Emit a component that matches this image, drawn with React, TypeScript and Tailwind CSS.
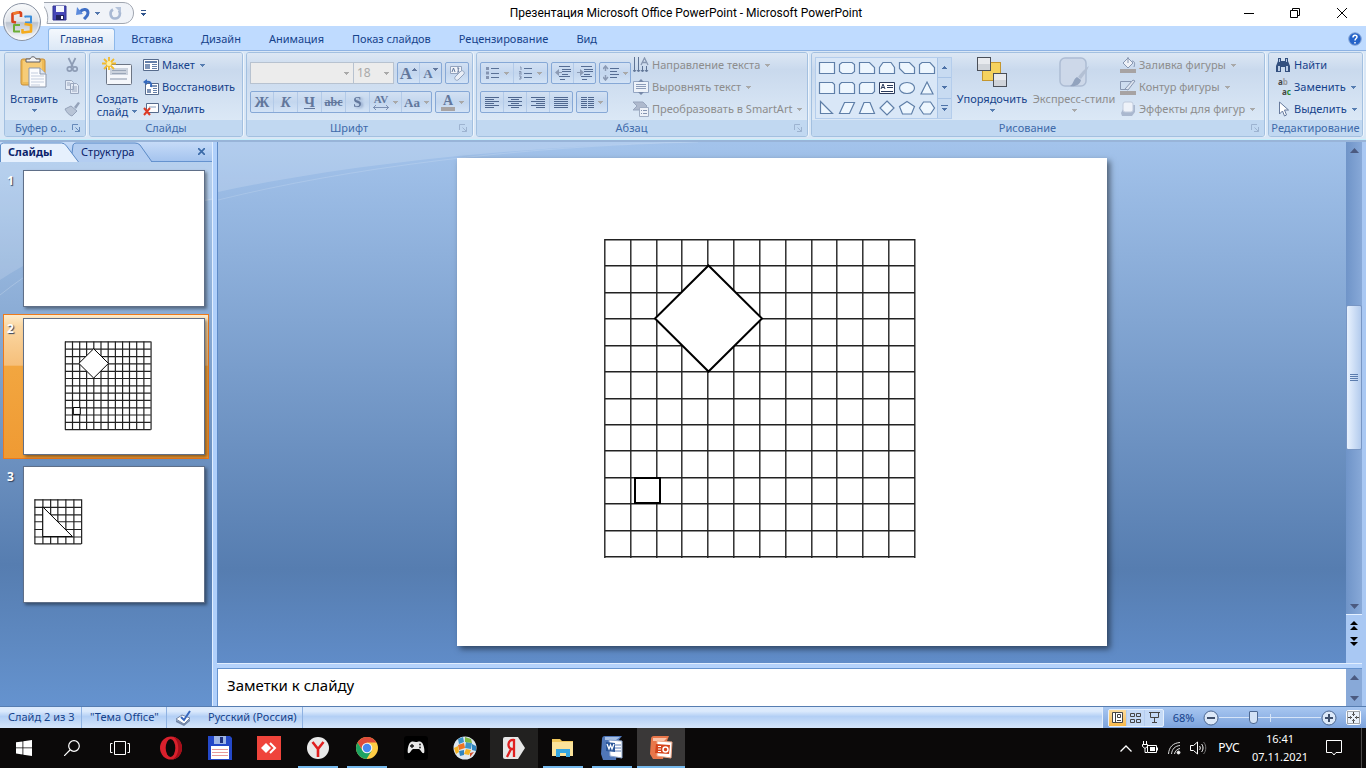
import React from "react";
import clsx from "clsx";

const COLS = [148, 174, 200, 225, 251, 277, 303, 329, 355, 380, 406, 432, 458];
const ROWS = [81, 107, 134, 160, 187, 213, 240, 266, 292, 319, 345, 372, 398];
const SMALL_COLS = [38, 67, 95, 121, 150, 179, 207];
const SMALL_ROWS = [117, 144, 171, 196, 224, 251, 276];

type DrawingProps = { thumb?: boolean };

function Grid({ cols, rows, thumb }: { cols: number[]; rows: number[]; thumb?: boolean }) {
  const dx = thumb ? 1 : -0.2;
  const dy = thumb ? 2 : 0.7;
  return (
    <g stroke="#222" strokeWidth={thumb ? 1.2 : 1.4}>
      {cols.map((x) => (
        <line key={"c" + x} x1={x + dx} x2={x + dx} y1={rows[0]} y2={rows[rows.length - 1] + 2} vectorEffect="non-scaling-stroke" />
      ))}
      {rows.map((y) => (
        <line key={"r" + y} x1={cols[0]} x2={cols[cols.length - 1]} y1={y + dy} y2={y + dy} vectorEffect="non-scaling-stroke" />
      ))}
    </g>
  );
}

function RhombusDrawing({ thumb }: DrawingProps) {
  return (
    <svg viewBox="0 0 650 488" className="block h-full w-full">
      <Grid cols={COLS} rows={ROWS} thumb={thumb} />
      <path d="M251.500 107.500L305 160.500L251.500 213.500L198 160.500Z" fill="#fff" stroke="#000" strokeWidth={thumb ? 1 : 2} vectorEffect="non-scaling-stroke" />
      <rect x="178" y="320" width="25" height="25" fill="#fff" stroke="#000" strokeWidth={thumb ? 1 : 2} vectorEffect="non-scaling-stroke" />
    </svg>
  );
}

function TriangleDrawing() {
  return (
    <svg viewBox="0 0 650 488" className="block h-full w-full">
      <Grid cols={SMALL_COLS} rows={SMALL_ROWS} thumb />
      <path d="M67.500 144V251.500H175Z" fill="#fff" stroke="#000" vectorEffect="non-scaling-stroke" />
    </svg>
  );
}

/* ---------- icons ---------- */

function Arrow({ className }: { className?: string }) {
  return (
    <svg width="5" height="3" viewBox="0 0 5 3" className={clsx("shrink-0", className)} fill="currentColor" shapeRendering="crispEdges">
      <path d="M0 0h5v1H0zM1 1h3v1H1zM2 2h1v1H2z" />
    </svg>
  );
}

function OfficeLogo() {
  return (
    <svg width="40" height="40" viewBox="0 0 40 40">
      <defs>
        <linearGradient id="orb" x1="0" y1="0" x2="0" y2="1">
          <stop offset="0" stopColor="#fafbfc" />
          <stop offset=".48" stopColor="#dfe3e9" />
          <stop offset=".52" stopColor="#bcc4d0" />
          <stop offset="1" stopColor="#fdfdfe" />
        </linearGradient>
      </defs>
      <circle cx="20" cy="20" r="18.500" fill="url(#orb)" stroke="#8a93a3" />
      <circle cx="20" cy="20" r="17" fill="none" stroke="#f4f6fa" strokeOpacity=".8" />
      <g fill="none" strokeWidth="2.600" strokeLinejoin="round">
        <path d="M14 20.500l-3.500-.7v-8l7.500-1.600 1 .8v4" stroke="#d8431c" />
        <path d="M11 11.500l6-1.300" stroke="#f17a2c" />
        <path d="M22.500 15l1-.5h5.500v6h-6" stroke="#3d8fdb" strokeWidth="2" />
        <path d="M18 23h-6v6.500h6" stroke="#6cae35" strokeWidth="2" />
        <path d="M20.500 27v3.500l8.500-1v-6.500l-6.500-1" stroke="#f5ab1c" />
      </g>
    </svg>
  );
}

function SaveIcon() {
  return (
    <svg width="16" height="16" viewBox="0 0 16 16">
      <path d="M1 1h13v14H1z" fill="#4546b8" stroke="#33348f" />
      <path d="M4 1h8v6H4z" fill="#f4f6fd" />
      <path d="M4 10h8v5H4z" fill="#22245f" />
      <path d="M9 11h2v3H9z" fill="#fff" />
    </svg>
  );
}

function UndoIcon() {
  return (
    <svg width="15" height="15" viewBox="0 0 15 15">
      <path d="M4 6c3-4 8-3 8 1 0 3-2 4-4 6" fill="none" stroke="#3f6fc6" strokeWidth="3" />
      <path d="M0 9l1-8 6 7z" fill="#5c8bdc" />
    </svg>
  );
}

function RedoIcon() {
  return (
    <svg width="15" height="15" viewBox="0 0 15 15">
      <path d="M5 3.500c-4 2-3 9 2 9s6-5 4-8" fill="none" stroke="#a9b9d3" strokeWidth="2.600" />
      <path d="M7 1h6v6z" fill="#b5c3da" />
    </svg>
  );
}

function PasteIcon() {
  return (
    <svg width="32" height="32" viewBox="0 0 32 32">
      <rect x="3" y="3" width="24" height="26" rx="2" fill="#eebb58" stroke="#c98f37" />
      <rect x="5" y="5" width="19" height="21" fill="#f6cc78" />
      <path d="M8 6V3h4c1-3 5-3 6 0h4v3z" fill="#f4f4f4" stroke="#5c5c64" />
      <path d="M11 12h11l6 6v13H11z" fill="#fbfcfe" stroke="#8b97ab" />
      <path d="M22 12v6h6" fill="#dde5f1" stroke="#8b97ab" />
      <path d="M13 17h7M13 20h13M13 23h13M13 26h13M13 29h9" stroke="#c3cdde" />
    </svg>
  );
}

function CutIcon() {
  return (
    <svg width="16" height="16" viewBox="0 0 16 16" fill="none" stroke="#8d9cb5" strokeWidth="1.700">
      <path d="M4.500 1l4.500 9M11.500 1L7 10" />
      <circle cx="5.500" cy="12" r="2.200" />
      <circle cx="11" cy="12" r="2.200" />
    </svg>
  );
}

function CopyIcon() {
  return (
    <svg width="16" height="16" viewBox="0 0 16 16" fill="#e4ebf6" stroke="#9ba8bf">
      <path d="M1.500 1.500h6l2 2v7h-8zM6.500 4.500h6l2 2v8h-8z" />
      <path d="M8 8h5M8 10h5M8 12h5M3 4h3M3 6h3" />
    </svg>
  );
}

function BrushIcon() {
  return (
    <svg width="16" height="16" viewBox="0 0 16 16">
      <path d="M10 6l4-5 2 1-4 6z" fill="#94a2b9" />
      <path d="M1 8l6-3 6 5-5 5c-3-1-5-3-7-7z" fill="#b8c4d6" stroke="#94a2b9" />
    </svg>
  );
}

function NewSlideIcon() {
  return (
    <svg width="32" height="32" viewBox="0 0 32 32">
      <rect x="5.500" y="8.500" width="25" height="20" rx="1" fill="#f5f7fb" stroke="#6c7584" />
      <path d="M9 12h18v7H9z" fill="#cbd2dd" />
      <path d="M11 14h14v1H11zM11 17h14v1H11z" fill="#9aa6b8" />
      <path d="M9 23h17" stroke="#8794a9" />
      <path d="M8 1v13M1 7.500h14M3 3l10 10M13 3L3 13" stroke="#f2bb2c" strokeWidth="1.800" />
      <circle cx="8" cy="7.500" r="2.500" fill="#fff0a3" />
    </svg>
  );
}

function LayoutIcon() {
  return (
    <svg width="16" height="16" viewBox="0 0 16 16">
      <path d="M.5 2.500h15v11H.5z" fill="#fff" stroke="#566b8c" />
      <path d="M2 4h12v2H2z" fill="#647fa9" />
      <path d="M2 7h5v5H2z" fill="#7f95b8" />
      <path d="M9 7.500h5M9 9.500h5M9 11.500h5" stroke="#647fa9" />
    </svg>
  );
}

function ResetIcon() {
  return (
    <svg width="16" height="16" viewBox="0 0 16 16">
      <path d="M2.500 4.500h13v11h-13z" fill="#fff" stroke="#566b8c" />
      <path d="M7 6h7v2H7zM4 10h4v4H4z" fill="#7f95b8" />
      <path d="M10 9.500h4M10 11.500h4M10 13.500h4" stroke="#647fa9" />
      <path d="M3 3c4-1 6 1 5 5" fill="none" stroke="#3469bd" strokeWidth="2" />
      <path d="M0 3l4-3v6z" fill="#3469bd" />
    </svg>
  );
}

function DeleteSlideIcon() {
  return (
    <svg width="16" height="16" viewBox="0 0 16 16">
      <path d="M3.500 2.500h12v9h-12z" fill="#fdfdfe" stroke="#566b8c" />
      <path d="M6 5h7v2H6z" fill="#c2cddd" />
      <path d="M1 7l6 7M7 7l-6 7" stroke="#dd3a25" strokeWidth="2" />
    </svg>
  );
}

function DialogIcon({ dim }: { dim?: boolean }) {
  return (
    <svg width="9" height="9" viewBox="0 0 9 9" fill="none" stroke={dim ? "#9db3d0" : "#6589b9"}>
      <path d="M.5 6V.5H6M3.500 3.500l4 4M7.500 3v4.500H3" />
    </svg>
  );
}

function ClearFormatIcon() {
  return (
    <svg width="17" height="16" viewBox="0 0 17 16">
      <path d="M1.500 1.500h11v7h-11z" fill="#f0f3f9" stroke="#93a3bd" />
      <path d="M3 7l1.500-4L6 7M8 3h2l-1 2 1 2H8" fill="none" stroke="#64789b" />
      <path d="M6 12l6-6c2-1 4 1 3 3l-6 6c-2 1-4-1-3-3z" fill="#e9eef7" stroke="#93a3bd" />
    </svg>
  );
}

function BulletsIcon({ numbered }: { numbered?: boolean }) {
  return (
    <svg width="14" height="14" viewBox="0 0 14 14">
      {numbered ? (
        <path d="M1 1h1v3M0 5.500h2v1.500H0v1h3M0 10h2v3H0M1 11.500h1" fill="none" stroke="#8494b1" />
      ) : (
        <path d="M0 1h3v3H0zM0 5.500h3v3H0zM0 10h3v3H0z" fill="#8494b1" />
      )}
      <path d="M5 2.500h8M5 7.500h8M5 11.500h8" stroke="#5a7196" />
    </svg>
  );
}

function IndentIcon({ flip }: { flip?: boolean }) {
  return (
    <svg width="16" height="14" viewBox="0 0 16 14">
      <path d="M4 .5h11M7 3.500h9M7 5.500h9M7 8.500h6M4 10.500h11M5 13.500h5" stroke="#566d93" />
      <path d={flip ? "M0 6h3V3l4 3.500L3 10V7H0z" : "M7 6H4V3L0 6.500 4 10V7h3z"} fill="#8b9ab4" />
    </svg>
  );
}

function LineSpacingIcon() {
  return (
    <svg width="16" height="16" viewBox="0 0 16 16">
      <path d="M2.500 1v5M2.500 10v5M0 4l2.500-3L5 4M0 12l2.500 3L5 12" fill="none" stroke="#8b9ab4" strokeWidth="1.500" />
      <path d="M7 3.500h9M7 6.500h7M7 9.500h9M7 12.500h7" stroke="#566d93" />
    </svg>
  );
}

type AlignKind = "left" | "center" | "right" | "justify";

function AlignIcon({ kind }: { kind: AlignKind }) {
  const paths = {
    left: "M0 .5h14M0 2.500h9M0 4.500h14M0 6.500h9M0 8.500h14M0 10.500h9",
    center: "M0 .5h14M3 2.500h8M0 4.500h14M3 6.500h8M0 8.500h14M3 10.500h8",
    right: "M0 .5h14M5 2.500h9M0 4.500h14M5 6.500h9M0 8.500h14M5 10.500h9",
    justify: "M0 .5h14M0 2.500h14M0 4.500h14M0 6.500h14M0 8.500h14M0 10.500h14",
  };
  return (
    <svg width="14" height="11" viewBox="0 0 14 11" stroke="#4f678f" shapeRendering="crispEdges">
      <path d={paths[kind]} />
    </svg>
  );
}

function ColumnsIcon() {
  return (
    <svg width="13" height="11" viewBox="0 0 13 11" stroke="#4f678f" shapeRendering="crispEdges">
      <path d="M0 .5h6M0 2.500h6M0 4.500h6M0 6.500h6M0 8.500h6M0 10.500h6M7 .5h6M7 2.500h6M7 4.500h6M7 6.500h6M7 8.500h6M7 10.500h6" />
    </svg>
  );
}

function TextDirectionIcon() {
  return (
    <svg width="16" height="16" viewBox="0 0 16 16">
      <path d="M1.500 0v14M5.500 0v14M9.500 9v5M13.500 9v5" stroke="#5f7495" />
      <path d="M0 13l1.500 2L3 13M4 13l1.500 2L7 13M8 13l1.500 2 1.500-2M12 13l1.500 2 1.500-2" fill="none" stroke="#5f7495" />
      <path d="M8 8l3.500-7L15 8M9.500 5.500h4" fill="none" stroke="#8797b1" strokeWidth="1.300" />
    </svg>
  );
}

function AlignTextIcon() {
  return (
    <svg width="16" height="16" viewBox="0 0 16 16">
      <path d="M.5 2.500h15v11H.5z" fill="#edf2f9" stroke="#93a5c2" />
      <path d="M3 5.500h10M3 7.500h10M3 9.500h10" stroke="#8b9bb8" />
      <path d="M5 3l3-3 3 3zM5 13l3 3 3-3z" fill="#7688a8" />
    </svg>
  );
}

function SmartArtIcon() {
  return (
    <svg width="16" height="16" viewBox="0 0 16 16">
      <path d="M0 1h10l4 4-4 4H0l4-4z" fill="#aeb9cd" stroke="#97a5bd" />
      <path d="M6.500 6.500h9v9h-9z" fill="#edf1f8" stroke="#a0adc3" />
      <path d="M8 9.500h1M10 9.500h4M8 12.500h1M10 12.500h4" stroke="#8494b1" />
    </svg>
  );
}

function ArrangeIcon() {
  return (
    <svg width="32" height="32" viewBox="0 0 32 32">
      <rect x="6.500" y="6.500" width="18" height="18" fill="#f5d25e" stroke="#c4962e" />
      <rect x="1.500" y="1.500" width="13" height="13" fill="#d0d4da" stroke="#4a4f58" />
      <path d="M2 2h12v6H2z" fill="#e8eaee" />
      <rect x="17.500" y="17.500" width="13" height="13" fill="#d0d4da" stroke="#4a4f58" />
      <path d="M18 18h12v6H18z" fill="#e8eaee" />
    </svg>
  );
}

function QuickStylesIcon() {
  return (
    <svg width="32" height="32" viewBox="0 0 32 32">
      <rect x="2" y="2" width="26" height="28" rx="5" fill="#cdd8e9" stroke="#adbcd3" strokeWidth="1.500" />
      <path d="M31 10c-5 3-8 7-11 11l3 2c3-4 6-8 8-13z" fill="#b3c0d4" />
      <path d="M19 21l4 3c-1 5-6 7-11 6 4-2 3-7 7-9z" fill="#92a3be" />
    </svg>
  );
}

function FillIcon() {
  return (
    <svg width="16" height="16" viewBox="0 0 16 16">
      <path d="M8 1l5 5-5 5-5-5z" fill="#eef1f7" stroke="#8897b1" />
      <path d="M8 0v6M12 4c3 0 3 3 2 6" fill="none" stroke="#8897b1" />
      <path d="M0 12h16v4H0z" fill="#a7a3a3" />
    </svg>
  );
}

function OutlineIcon() {
  return (
    <svg width="16" height="16" viewBox="0 0 16 16">
      <path d="M11 2.500H.5v8H8" fill="none" stroke="#8897b1" />
      <path d="M5 10l8-9 2 1-7 9z" fill="#dfe6f1" stroke="#8897b1" />
      <path d="M0 12h16v4H0z" fill="#a7a3a3" />
    </svg>
  );
}

function EffectsIcon() {
  return (
    <svg width="16" height="16" viewBox="0 0 16 16">
      <path d="M5 4h10v7l-3 4H2l-1-3z" fill="#aab8cf" />
      <rect x="3" y="1" width="10" height="10" rx="2" fill="#eef2f9" stroke="#c0cbdd" />
    </svg>
  );
}

function FindIcon() {
  return (
    <svg width="16" height="16" viewBox="0 0 16 16">
      <path d="M3 1h3v3h4V1h3v3l2 5v6h-5v-5H6v5H1V9l2-5z" fill="#33507f" />
      <path d="M3 9h2v5H3zM11 9h2v5h-2zM4 2h1v3H4zM11 2h1v3h-1z" fill="#b9cbe5" />
    </svg>
  );
}

function SelectIcon() {
  return (
    <svg width="16" height="16" viewBox="0 0 16 16">
      <path d="M4.500 1v12l3-3 2 5 2-1-2-5h4z" fill="#fff" stroke="#66799b" />
    </svg>
  );
}

const SHAPES = [
  "M1.500 3.500h15v11h-15z",
  "M4 3.500h10l2.500 2v7l-2.500 2H4l-2.500-2v-7z",
  "M1.500 3.500h10l5 5v6h-15z",
  "M5 3.500h8l3.500 5v6h-15v-6z",
  "M1.500 3.500h10l5 5v6h-10l-5-5z",
  "M4 3.500h8l4.500 5v6h-15v-9z",
  "M1.500 3.500h13l2 2v9h-15z",
  "M3.500 3.500h11l2 2v9h-15v-9z",
  "M3.500 3.500h13v9l-2 2h-13v-9z",
  "",
  "M9 3.500c10 0 10 11 0 11s-10-11 0-11z",
  "M9 3l6 12H3z",
  "M2.500 2.500l12 12h-12z",
  "M6.500 3.500h10l-5 11h-10z",
  "M6 3.500h6l4.500 11h-15z",
  "M9 2l7 7-7 7-7-7z",
  "M9 2.500l7.500 5-3 7.500h-9l-3-7.500z",
  "M5.500 3h7l4 6-4 6h-7l-4-6z",
];

function ShapeIcon({ d }: { d: string }) {
  return (
    <svg width="18" height="18" viewBox="0 0 18 18">
      {d ? (
        <path d={d} fill="#edf6fe" stroke="#5f7fa8" strokeWidth="1.200" />
      ) : (
        <g stroke="#2b3b5c">
          <path d="M1.500 3.500h15v11h-15z" fill="#fff" />
          <path d="M3 10l2-5 2 5M4 8.500h2M9 6.500h6M9 8.500h6M3 12.500h12" fill="none" />
        </g>
      )}
    </svg>
  );
}

/* ---------- ribbon building blocks ---------- */

type GroupProps = {
  title: string;
  className: string;
  launcher?: "on" | "dim";
  children: React.ReactNode;
};

function Group({ title, className, launcher, children }: GroupProps) {
  return (
    <section className={clsx("flex flex-col overflow-hidden rounded-[3px] border border-[#a3c0e0] shadow-[1px_0_0_#eff5fc]", className)}>
      <div className="flex h-[68px] bg-linear-to-b from-[#dce7f4] from-0% via-[#c9d9ed] via-25% to-[#dbe8f6] px-[3px] pt-px">{children}</div>
      <div className={clsx("flex h-4 items-center bg-[#c1d8f1] text-[#3e6aaa]", launcher ? "px-1" : "px-0.5")}>
        <h2 className={clsx("flex-1 truncate text-center", launcher === "dim" && "pr-3")}>{title}</h2>
        {launcher && (
          <button aria-label={title + ": параметры"}>
            <DialogIcon dim={launcher === "dim"} />
          </button>
        )}
      </div>
    </section>
  );
}

type SmallButtonProps = { icon: React.ReactNode; label: string; menu?: boolean; disabled?: boolean };

function SmallButton({ icon, label, menu, disabled }: SmallButtonProps) {
  return (
    <button disabled={disabled} className={clsx("flex h-[22px] items-center gap-[3px] whitespace-nowrap", disabled ? "text-[#8d8d8d]" : "text-[#15428b]")}>
      {icon}
      <span>{label}</span>
      {menu && <Arrow className={clsx("ml-0.5", disabled ? "text-[#a9a9a9]" : "text-[#567db1]")} />}
    </button>
  );
}

function ButtonStrip({ children }: { children: React.ReactNode }) {
  return (
    <div className="flex h-[22px] divide-x divide-[#b3cae8] rounded-[2px] border border-[#86a8d6] bg-linear-to-b from-[#d3e1f3] via-[#c3d6ee] to-[#d3e3f6]">
      {children}
    </div>
  );
}

type StripButtonProps = { label: string; className: string; menu?: boolean; children: React.ReactNode };

function StripButton({ label, className, menu, children }: StripButtonProps) {
  return (
    <button disabled aria-label={label} className={clsx("flex items-center justify-center gap-1 font-['Liberation_Serif',serif] text-[15px] leading-none font-bold text-[#62779c]", className)}>
      {children}
      {menu && <Arrow className="text-[#a9a9a9]" />}
    </button>
  );
}

const TABS = ["Главная", "Вставка", "Дизайн", "Анимация", "Показ слайдов", "Рецензирование", "Вид"];

function TitleBar() {
  return (
    <header className="flex h-[26px] items-center bg-white">
      <div className="relative ml-11 flex h-[22px] w-[90px] items-center">
        <svg className="absolute inset-0" width="90" height="22" viewBox="0 0 90 22">
          <path d="M-4 .5h83c14 0 14 21 0 21H3C5 14 3 6-4 .5z" fill="#f0f3f8" stroke="#a0a6b0" />
        </svg>
        <div className="relative flex items-center pl-2">
          <button aria-label="Сохранить"><SaveIcon /></button>
          <button aria-label="Отменить" className="ml-2"><UndoIcon /></button>
          <button aria-label="Список отмены" className="ml-1 text-[#5377ad]"><Arrow /></button>
          <button aria-label="Вернуть" className="ml-2"><RedoIcon /></button>
        </div>
      </div>
      <button aria-label="Настройка панели быстрого доступа" className="ml-[7px]">
        <svg width="5" height="6" viewBox="0 0 5 6" fill="#31548c" shapeRendering="crispEdges"><path d="M0 0h5v1H0zM0 3h5v1H0zM1 4h3v1H1zM2 5h1v1H2z" /></svg>
      </button>
      <h1 className="flex-1 text-center font-[Roboto,sans-serif] text-[12px] text-black">Презентация Microsoft Office PowerPoint - Microsoft PowerPoint</h1>
      <div className="flex">
        <button aria-label="Свернуть" className="flex w-[46px] justify-center">
          <svg width="10" height="10" viewBox="0 0 10 10" stroke="#000"><path d="M0 5.500h10" /></svg>
        </button>
        <button aria-label="Восстановить окно" className="flex w-[46px] justify-center">
          <svg width="10" height="10" viewBox="0 0 10 10" fill="none" stroke="#000"><path d="M.5 2.500h7v7h-7zM2.500 2.500v-2h7v7h-2" /></svg>
        </button>
        <button aria-label="Закрыть" className="flex w-12 justify-center">
          <svg width="10" height="10" viewBox="0 0 10 10" stroke="#000"><path d="M0 0l10 10M10 0L0 10" /></svg>
        </button>
      </div>
    </header>
  );
}

function TabBar() {
  return (
    <nav className="flex h-6 items-end bg-[#bfdbff] pr-1 pl-12">
      {TABS.map((tab, i) => (
        <button
          key={tab}
          className={clsx(
            "h-[22px] text-[11px] text-[#15428b]",
            i === 0 ? "mr-0.5 rounded-t-[3px] border border-b-0 border-[#8db8ea] bg-linear-to-b from-[#f4f8fd] to-[#dce8f6] px-[11px]" : "px-[14px]"
          )}
        >
          {tab}
        </button>
      ))}
      <button aria-label="Справка" className="mb-1 ml-auto">
        <svg width="14" height="14" viewBox="0 0 14 14">
          <circle cx="7" cy="7" r="6.300" fill="#2563c9" stroke="#8aa9d8" />
          <path d="M5 5.500c0-3 4-3 4-.5C9 6.500 7 6.500 7 8.500M7 10v1.500" fill="none" stroke="#fff" strokeWidth="1.500" />
        </svg>
      </button>
    </nav>
  );
}

function Ribbon() {
  return (
    <div className="flex h-[90px] shrink-0 gap-[3px] border-t border-b border-t-[#8db2e3] border-b-[#c3eefb] bg-[#d9e7f6] pt-px pr-[3px] pb-0.5 pl-1 text-[11px] leading-4">
      <Group title="Буфер о..." className="w-[82px]" launcher="on">
        <button className="flex w-[52px] flex-col items-center pt-0.5 text-[#15428b]">
          <PasteIcon />
          <span className="mt-[3px]">Вставить</span>
          <Arrow className="mt-0.5 text-[#567db1]" />
        </button>
        <div className="ml-1 flex flex-col">
          <button disabled aria-label="Вырезать" className="flex h-[22px] items-center"><CutIcon /></button>
          <button disabled aria-label="Копировать" className="flex h-[22px] items-center"><CopyIcon /></button>
          <button disabled aria-label="Формат по образцу" className="flex h-[22px] items-center"><BrushIcon /></button>
        </div>
      </Group>

      <Group title="Слайды" className="w-[154px]">
        <button className="flex w-12 flex-col items-center pt-0.5 leading-[13px] text-[#15428b]">
          <NewSlideIcon />
          <span className="mt-1">Создать</span>
          <span className="flex items-center gap-1">слайд <Arrow className="text-[#567db1]" /></span>
        </button>
        <div className="ml-0.5 flex flex-col">
          <SmallButton icon={<LayoutIcon />} label="Макет" menu />
          <SmallButton icon={<ResetIcon />} label="Восстановить" />
          <SmallButton icon={<DeleteSlideIcon />} label="Удалить" />
        </div>
      </Group>

      <Group title="Шрифт" className="w-[227px]" launcher="dim">
        <div className="flex flex-col gap-[7px] pt-2">
          <div className="flex gap-[3px]">
            <div className="flex">
              <div className="flex h-[22px] items-center border border-[#b7c2d0] bg-[#ececec] pr-1 text-[#a9a9a9]">
                <select disabled aria-label="Шрифт" className="w-[93px] appearance-none bg-transparent">
                  <option></option>
                </select>
                <Arrow />
              </div>
              <div className="flex h-[22px] items-center border border-l-0 border-[#b7c2d0] bg-[#ececec] pr-1 pl-[3px] text-[#a9a9a9]">
                <select disabled aria-label="Размер шрифта" className="w-[27px] appearance-none bg-transparent text-[12px] opacity-100">
                  <option>18</option>
                </select>
                <Arrow />
              </div>
            </div>
            <ButtonStrip>
              <StripButton label="Увеличить размер" className="w-[22px]"><span className="text-[17px]">A</span><Arrow className="-mt-2 -ml-1 rotate-180" /></StripButton>
              <StripButton label="Уменьшить размер" className="w-[21px]"><span className="text-[13px]">A</span><Arrow className="-mt-2 -ml-1" /></StripButton>
            </ButtonStrip>
            <ButtonStrip>
              <StripButton label="Очистить формат" className="w-[22px]"><ClearFormatIcon /></StripButton>
            </ButtonStrip>
          </div>
          <div className="flex gap-[3px]">
            <ButtonStrip>
              <StripButton label="Полужирный" className="w-[23px]">Ж</StripButton>
              <StripButton label="Курсив" className="w-6"><i>К</i></StripButton>
              <StripButton label="Подчеркнутый" className="w-6"><u>Ч</u></StripButton>
              <StripButton label="Зачеркнутый" className="w-6"><s className="text-[12px]">abc</s></StripButton>
              <StripButton label="Тень" className="w-6"><span className="drop-shadow-[2px_1px_1px_#8ea4c7]">S</span></StripButton>
              <StripButton label="Интервал" className="w-8" menu>
                <span className="flex flex-col items-center text-[11px]">
                  AV
                  <svg width="16" height="5" viewBox="0 0 16 5" fill="none" stroke="#7c90b3"><path d="M0 2.500h16M3 0L.5 2.500 3 5M13 0l2.500 2.500L13 5" /></svg>
                </span>
              </StripButton>
              <StripButton label="Регистр" className="w-[29px]" menu><span className="text-[13px]">Aa</span></StripButton>
            </ButtonStrip>
            <ButtonStrip>
              <StripButton label="Цвет текста" className="w-[33px]" menu>
                <span className="border-b-4 border-[#a7a3a3] px-0.5 text-[14px] leading-[13px]">A</span>
              </StripButton>
            </ButtonStrip>
          </div>
        </div>
      </Group>

      <Group title="Абзац" className="w-[332px]" launcher="dim">
        <div className="flex w-[151px] flex-col gap-[7px] pt-2">
          <div className="flex gap-[3px]">
            <ButtonStrip>
              <StripButton label="Маркеры" className="w-[33px]" menu><BulletsIcon /></StripButton>
              <StripButton label="Нумерация" className="w-[33px]" menu><BulletsIcon numbered /></StripButton>
            </ButtonStrip>
            <ButtonStrip>
              <StripButton label="Уменьшить отступ" className="w-[22px]"><IndentIcon /></StripButton>
              <StripButton label="Увеличить отступ" className="w-[21px]"><IndentIcon flip /></StripButton>
            </ButtonStrip>
            <ButtonStrip>
              <StripButton label="Междустрочный интервал" className="w-[30px]" menu><LineSpacingIcon /></StripButton>
            </ButtonStrip>
          </div>
          <div className="flex gap-[3px]">
            <ButtonStrip>
              <StripButton label="По левому краю" className="w-[23px]"><AlignIcon kind="left" /></StripButton>
              <StripButton label="По центру" className="w-[23px]"><AlignIcon kind="center" /></StripButton>
              <StripButton label="По правому краю" className="w-[23px]"><AlignIcon kind="right" /></StripButton>
              <StripButton label="По ширине" className="w-[22px]"><AlignIcon kind="justify" /></StripButton>
            </ButtonStrip>
            <ButtonStrip>
              <StripButton label="Колонки" className="w-[30px]" menu><ColumnsIcon /></StripButton>
            </ButtonStrip>
          </div>
        </div>
        <div className="ml-0.5 flex flex-col">
          <SmallButton icon={<TextDirectionIcon />} label="Направление текста" menu disabled />
          <SmallButton icon={<AlignTextIcon />} label="Выровнять текст" menu disabled />
          <SmallButton icon={<SmartArtIcon />} label="Преобразовать в SmartArt" menu disabled />
        </div>
      </Group>

      <Group title="Рисование" className="min-w-[450px] flex-1" launcher="dim">
        <div className="mt-[3px] flex h-[62px] border border-[#b4cdec] bg-[#d9e7f7]">
          <div className="grid grid-cols-6 pl-px">
            {SHAPES.map((d, i) => (
              <button key={i} aria-label={"Фигура " + (i + 1)} className="flex h-5 w-5 items-center justify-center">
                <ShapeIcon d={d} />
              </button>
            ))}
          </div>
          <div className="flex w-[14px] flex-col divide-y divide-[#a9c4e6] border-l border-[#a9c4e6] bg-[#c8dbf1] text-[#4d72a8]">
            <button aria-label="Вверх" className="flex flex-1 items-center justify-center"><Arrow className="rotate-180" /></button>
            <button aria-label="Вниз" className="flex flex-1 items-center justify-center"><Arrow /></button>
            <button aria-label="Дополнительно" className="flex flex-1 flex-col items-center justify-center gap-0.5"><span className="h-px w-[7px] bg-[#4d72a8]" /><Arrow /></button>
          </div>
        </div>
        <button className="ml-0.5 flex w-[76px] flex-col items-center pt-0.5 text-[#15428b]">
          <ArrangeIcon />
          <span className="mt-[3px]">Упорядочить</span>
          <Arrow className="mt-0.5 text-[#567db1]" />
        </button>
        <button disabled className="ml-0.5 flex w-[84px] flex-col items-center pt-0.5 text-[#8d8d8d]">
          <QuickStylesIcon />
          <span className="mt-[3px] whitespace-nowrap">Экспресс-стили</span>
          <Arrow className="mt-0.5 text-[#a9a9a9]" />
        </button>
        <div className="ml-1 flex flex-col">
          <SmallButton icon={<FillIcon />} label="Заливка фигуры" menu disabled />
          <SmallButton icon={<OutlineIcon />} label="Контур фигуры" menu disabled />
          <SmallButton icon={<EffectsIcon />} label="Эффекты для фигур" menu disabled />
        </div>
      </Group>

      <Group title="Редактирование" className="w-[95px]">
        <div className="ml-[3px] flex flex-col">
          <SmallButton icon={<FindIcon />} label="Найти" />
          <SmallButton
            icon={
              <span className="flex w-4 flex-col text-[8px] leading-[10px] font-bold text-[#444]" aria-hidden="true">
                <span>a<span className="text-[#999]">b</span></span>
                <span className="self-end">a<span className="text-[#1c8a2c]">c</span></span>
              </span>
            }
            label="Заменить"
            menu
          />
          <SmallButton icon={<SelectIcon />} label="Выделить" menu />
        </div>
      </Group>
    </div>
  );
}

/* ---------- left pane ---------- */

function SlidePanel() {
  const slides = [null, <RhombusDrawing thumb />, <TriangleDrawing />];
  return (
    <aside className="relative flex w-[212px] shrink-0 flex-col bg-linear-to-b from-[#b0cdef] via-[#567db0] via-75% to-[#6593cf]">
      <svg className="absolute inset-x-0 top-5" width="212" height="150" viewBox="0 0 212 150" preserveAspectRatio="none">
        <path d="M0 0h212v38C130 50 50 85 0 118z" fill="#fff" fillOpacity=".14" />
        <path d="M0 133C60 85 140 50 212 37" fill="none" stroke="#fff" strokeOpacity=".2" />
      </svg>
      <div className="relative flex h-5 border-b border-[#6593cf] bg-linear-to-b from-[#c6dbf8] to-[#a5c4ee] text-[11px] leading-5 text-[#0b1f6b]">
        <svg className="absolute inset-0" width="160" height="20" viewBox="0 0 160 20">
          <path d="M71 20l2-17q1-2 3-2h59q3 0 5 2l12 17" fill="#b3cdf1" stroke="#5b8ac6" />
          <path d="M.5 20V3q1-2 3-2h58q3 0 5 3l12 16" fill="#e6f0fd" stroke="#5b8ac6" />
        </svg>
        <button className="relative w-[73px] pl-2 text-left font-bold">Слайды</button>
        <button className="relative pl-2">Структура</button>
        <button aria-label="Закрыть область" className="relative mr-[7px] ml-auto">
          <svg width="7" height="7" viewBox="0 0 7 7" stroke="#3b6aa8" strokeWidth="1.700"><path d="M0 0l7 7M7 0L0 7" /></svg>
        </button>
      </div>
      <ol className="relative flex flex-col gap-[3px] pt-1 pr-[3px] pl-[3px]">
        {slides.map((drawing, i) => (
          <li
            key={i}
            className={clsx(
              "flex h-[145px] items-start border pt-[3px]",
              i === 1 ? "border-[#ee7a1b] bg-[linear-gradient(to_bottom,#fdebcb_0%,#fbd7a2_8%,#f6bf7a_35%,#f2a640_36%,#ef9a33_100%)]" : "border-transparent"
            )}
          >
            <span className="w-[19px] pt-[3px] pl-[3px] text-[12px] leading-4 font-bold text-white [text-shadow:1px_1px_1px_#33445f]">{i + 1}</span>
            <button aria-label={"Слайд " + (i + 1)} className="h-[137px] w-[182px] border border-[#5f6f88] bg-white shadow-[2px_2px_3px_#00000066]">
              {drawing}
            </button>
          </li>
        ))}
      </ol>
    </aside>
  );
}

function ScrollArrow({ label, up }: { label: string; up?: boolean }) {
  return (
    <button aria-label={label} className="flex h-4 w-full items-center justify-center">
      <svg width="9" height="5" viewBox="0 0 9 5" fill="#4b5a80" className={clsx(up && "rotate-180")}><path d="M0 0h9L4.500 5z" /></svg>
    </button>
  );
}

function DoubleArrow({ label, up }: { label: string; up?: boolean }) {
  return (
    <button aria-label={label} className="flex h-4 w-full items-center justify-center">
      <svg width="8" height="9" viewBox="0 0 8 9" className={clsx(up && "rotate-180")}><path d="M0 0h8L4 4zM0 5h8L4 9z" /></svg>
    </button>
  );
}

function Workspace() {
  return (
    <main className="flex min-w-0 flex-1 flex-col bg-[#a9c8f3] pr-1">
      <div className="flex flex-1">
        <div className="relative flex flex-1 items-center justify-center border-l border-[#5f8bc7] bg-linear-to-b from-[#a3c3eb] via-[#567db0] via-82% to-[#608cc8]">
          <svg className="absolute top-0 left-0" width="480" height="60" viewBox="0 0 480 60">
            <path d="M0 0h480C300 4 130 22 0 50z" fill="#fff" fillOpacity=".16" />
            <path d="M0 58C130 26 300 4 480 0" fill="none" stroke="#fff" strokeOpacity=".15" />
          </svg>
          <div className="relative mb-0.5 h-[488px] w-[650px] bg-white shadow-[3px_3px_6px_#00000080]">
            <RhombusDrawing />
          </div>
        </div>
        <div className="flex w-4 flex-col">
          <div className="flex flex-1 flex-col border-b border-[#e4f0ff] bg-linear-to-r from-[#6f94c8] to-[#88a9d8]">
            <ScrollArrow label="Прокрутить вверх" up />
            <div className="min-h-0 flex-[147]" />
            <div className="flex h-[145px] flex-col items-center justify-center gap-px rounded-[2px] border border-[#7896c4] bg-linear-to-r from-[#e9f2fe] to-[#b3cbed]">
              <span className="h-px w-2 bg-[#5b7cae]" />
              <span className="h-px w-2 bg-[#5b7cae]" />
              <span className="h-px w-2 bg-[#5b7cae]" />
              <span className="h-px w-2 bg-[#5b7cae]" />
            </div>
            <div className="min-h-0 flex-[149]" />
            <ScrollArrow label="Прокрутить вниз" />
          </div>
          <div className="h-[48px] pt-0.5">
            <DoubleArrow label="Предыдущий слайд" up />
            <DoubleArrow label="Следующий слайд" />
          </div>
        </div>
      </div>
      <div className="h-[6px] border-t border-b border-t-[#e1eeff] border-b-[#6593cf] bg-[#b4d2fb]" />
      <div className="flex h-[37px]">
        <textarea
          aria-label="Заметки"
          defaultValue="Заметки к слайду"
          className="block h-full flex-1 resize-none overflow-hidden border-l border-[#6593cf] bg-white px-[9px] pt-1 text-[15px] leading-6 text-black outline-none"
        />
        <div className="flex w-4 flex-col justify-between bg-[#88a9d8]">
          <ScrollArrow label="Заметки вверх" up />
          <ScrollArrow label="Заметки вниз" />
        </div>
      </div>
    </main>
  );
}

function StatusBar() {
  return (
    <footer className="flex h-[22px] shrink-0 items-stretch border-t border-[#567db1] bg-linear-to-b from-[#dceafc] from-20% via-[#b3cff5] via-45% to-[#d5e5fa] text-[11px] leading-5 text-[#15428b]">
      <span className="w-[82px] border-r border-[#8fb2e2] pl-2">Слайд 2 из 3</span>
      <span className="w-[85px] border-r border-[#8fb2e2] pl-2">"Тема Office"</span>
      <button aria-label="Проверка правописания" className="flex w-8 items-center justify-center">
        <svg width="17" height="16" viewBox="0 0 17 16">
          <path d="M1 9l6-4 8 3-6 6z" fill="#fff" stroke="#7285a5" />
          <path d="M1 10l8 4 6-5v2l-6 5-8-4z" fill="#7285a5" />
          <path d="M6 7l3 3 6-9" fill="none" stroke="#3767bd" strokeWidth="2" />
        </svg>
      </button>
      <span className="w-[104px] border-r border-[#8fb2e2] pl-[9px]">Русский (Россия)</span>
      <div className="ml-auto flex items-center border-l border-[#e3eefc] bg-linear-to-b from-[#a8c7f1] to-[#7da3dc] px-[5px]">
        <div className="flex h-[18px] divide-x divide-[#b5cdef] rounded-[2px] border border-[#e4effd] bg-[#c5daf6]">
          <button aria-label="Обычный" className="flex w-[18px] items-center justify-center bg-linear-to-b from-[#fbdc9c] to-[#f8b949]">
            <svg width="11" height="11" viewBox="0 0 11 11" fill="#fff" stroke="#444"><path d="M.5.5h10v10H.5zM3.500.5v10M5.500 2.500h3v3h-3zM5 8.500h4" /></svg>
          </button>
          <button aria-label="Сортировщик слайдов" className="flex w-[18px] items-center justify-center">
            <svg width="11" height="10" viewBox="0 0 11 10" fill="none" stroke="#444"><path d="M.5.5h4v3h-4zM6.500.5h4v3h-4zM.5 6.500h4v3h-4zM6.500 6.500h4v3h-4z" /></svg>
          </button>
          <button aria-label="Показ слайдов" className="flex w-[18px] items-center justify-center">
            <svg width="11" height="11" viewBox="0 0 11 11" fill="none" stroke="#444"><path d="M0 .5h11M1.500 1v4.500h8V1M5.500 6v4M3 10.500h5" /></svg>
          </button>
        </div>
        <button className="w-[39px] text-center">68%</button>
        <button aria-label="Уменьшить">
          <svg width="16" height="16" viewBox="0 0 16 16"><circle cx="8" cy="8" r="7" fill="#dce8f8" stroke="#4d6892" /><path d="M4 8h8" stroke="#3f4f6b" strokeWidth="2" /></svg>
        </button>
        <div className="relative flex w-[102px] items-center">
          <span className="absolute left-[51px] h-2 w-px bg-[#d5e4f8]" />
          <input
            type="range"
            aria-label="Масштаб"
            min={0}
            max={100}
            defaultValue={32}
            className="relative h-px w-full appearance-none bg-[#d5e4f8] [&::-webkit-slider-thumb]:h-[13px] [&::-webkit-slider-thumb]:w-[9px] [&::-webkit-slider-thumb]:appearance-none [&::-webkit-slider-thumb]:rounded-t-[1px] [&::-webkit-slider-thumb]:rounded-b-[4px] [&::-webkit-slider-thumb]:border [&::-webkit-slider-thumb]:border-[#4d6892] [&::-webkit-slider-thumb]:bg-[#d3e2f6]"
          />
        </div>
        <button aria-label="Увеличить">
          <svg width="16" height="16" viewBox="0 0 16 16"><circle cx="8" cy="8" r="7" fill="#dce8f8" stroke="#4d6892" /><path d="M4 8h8M8 4v8" stroke="#3f4f6b" strokeWidth="2" /></svg>
        </button>
        <button aria-label="По размеру окна" className="ml-[9px]">
          <svg width="15" height="15" viewBox="0 0 15 15">
            <rect x=".5" y=".5" width="14" height="14" rx="2" fill="#eaf1fb" stroke="#fff" />
            <path d="M1.500 1.500h12v12h-12z" fill="none" stroke="#555" strokeDasharray="1 1" />
            <path d="M7.500 2v4M7.500 9v4M2 7.500h4M9 7.500h4" fill="none" stroke="#444" />
            <path d="M6 4.500h3M6 10.500h3M4.500 6v3M10.500 6v3" fill="none" stroke="#666" />
          </svg>
        </button>
      </div>
    </footer>
  );
}

/* ---------- Windows taskbar ---------- */

const APPS = [
  {
    name: "Opera",
    icon: (
      <svg width="24" height="24" viewBox="0 0 24 24">
        <ellipse cx="12" cy="12" rx="11" ry="11.500" fill="#d9202c" />
        <path d="M14 .8c12 2 12 20.400 0 22.400 7-4 7-18.400 0-22.400z" fill="#a50e19" />
        <ellipse cx="11.500" cy="12" rx="4.800" ry="9" fill="#0b0909" />
      </svg>
    ),
  },
  {
    name: "Диск",
    icon: (
      <svg width="24" height="24" viewBox="0 0 24 24">
        <path d="M0 0h22l2 2v22H0z" fill="#2448c8" />
        <path d="M6 0h12v8H6z" fill="#9fb6e6" />
        <path d="M12 1h3v6h-3z" fill="#1d2f7c" />
        <path d="M3 10h18v13H3z" fill="#fff" />
        <path d="M4 13.500h16M4 16.500h16M4 19.500h16" stroke="#e79b9b" />
      </svg>
    ),
  },
  {
    name: "AnyDesk",
    icon: (
      <svg width="24" height="24" viewBox="0 0 24 24">
        <path d="M0 0h24v24H0z" fill="#ef443b" />
        <path d="M4 12l5-5 5 5-5 5z" fill="#fff" />
        <path d="M13 7l5 5-5 5" fill="none" stroke="#fff" strokeWidth="2" />
      </svg>
    ),
  },
  {
    name: "Яндекс.Браузер",
    open: true,
    icon: (
      <svg width="24" height="24" viewBox="0 0 24 24">
        <circle cx="12" cy="12" r="11" fill="#e9e9e9" />
        <path d="M6.500 6l5.500 7 5.500-7M12 12v9" fill="none" stroke="#e02020" strokeWidth="2.600" />
      </svg>
    ),
  },
  {
    name: "Chrome",
    open: true,
    icon: (
      <svg width="24" height="24" viewBox="0 0 24 24">
        <circle cx="12" cy="12" r="11" fill="#fc4" />
        <path d="M2.500 6.500A11 11 0 0 1 21.500 6.500H12L7.500 14.500z" fill="#de4b3b" />
        <path d="M2.500 6.500A11 11 0 0 0 11.500 23L16.500 15l-9-.5z" fill="#1da362" />
        <circle cx="12" cy="12" r="5.300" fill="#f4f4f4" />
        <circle cx="12" cy="12" r="4.200" fill="#4688f1" />
      </svg>
    ),
  },
  {
    name: "Игры",
    icon: (
      <svg width="24" height="24" viewBox="0 0 24 24">
        <rect width="24" height="24" rx="3" fill="#000" />
        <path d="M7 6c2-1 3 0 5 0s3-1 5 0c3 1 4 10 3 11-2 1-3-3-5-4H9c-2 1-3 5-5 4-1-1 0-10 3-11z" fill="#e8e8e8" />
        <path d="M8 8v4M6 10h4" stroke="#111" strokeWidth="1.300" />
        <circle cx="16" cy="8.500" r="1" fill="#333" />
        <circle cx="16" cy="11.500" r="1" fill="#333" />
      </svg>
    ),
  },
  {
    name: "Сеть",
    icon: (
      <svg width="24" height="24" viewBox="0 0 24 24">
        <circle cx="12" cy="12" r="11.500" fill="#dfe7ee" />
        <path d="M5 3l5-2 1 5-5 2zM13 6l6 1-1 6-6-1z" fill="#3b94c9" />
        <path d="M12 1l6 2 1 4-7-1z" fill="#7fb944" />
        <path d="M5 9l6-2 1 5-6 2z" fill="#ee7423" />
        <path d="M1 12l4-2 1 6-3 2zM13 13l5 1-2 5-5-1z" fill="#f3b325" />
        <path d="M6 15l5-1v5l-4 1zM19 8l4 2v5l-4-1z" fill="#2f84bf" />
        <path d="M17 17l4-1-4 5z" fill="#d44d2d" />
      </svg>
    ),
  },
  {
    name: "Яндекс",
    hot: true,
    icon: (
      <svg width="24" height="24" viewBox="0 0 24 24">
        <path d="M3 1h13l7 11-7 11H3q-2 0-2-2V3q0-2 2-2z" fill="#e7e7e7" />
        <path d="M12 3v18M12 4c-7-1-7 9-2 9h2M9 13l-4 8" fill="none" stroke="#e02020" strokeWidth="2.300" />
      </svg>
    ),
  },
  {
    name: "Проводник",
    open: true,
    icon: (
      <svg width="24" height="24" viewBox="0 0 24 24">
        <path d="M1 3h8l2 2h11v15H1z" fill="#f0c75b" />
        <path d="M1 6h21v14H1z" fill="#fbe39a" />
        <path d="M5 13h14v8h-4v-4H9v4H5z" fill="#36a6e0" />
      </svg>
    ),
  },
  {
    name: "Word",
    open: true,
    icon: (
      <svg width="24" height="24" viewBox="0 0 24 24">
        <path d="M2 3q0-3 3-3h17l-4 5-2 19H3L1 18z" fill="#5077b8" />
        <path d="M5 1h15l-4 3H5z" fill="#a6bfe4" />
        <path d="M9 4l13 1v17l-12-2z" fill="#fff" stroke="#8da6cd" />
        <path d="M15 9h6M15 12h6M15 15h6" stroke="#5d7fb8" />
        <path d="M6 6l9 1v9l-9-1z" fill="#2b579a" />
        <path d="M7 8l2 5 1.500-4 1.500 4 2-5" fill="none" stroke="#fff" strokeWidth="1.300" />
      </svg>
    ),
  },
  {
    name: "PowerPoint",
    active: true,
    icon: (
      <svg width="24" height="24" viewBox="0 0 24 24">
        <path d="M2 3q0-3 3-3h15l-2 5-4 18H4l-3-5z" fill="#e8764a" />
        <path d="M4 2h14l-3 3H4z" fill="#f9c3aa" />
        <path d="M8 5l15 1-1 16-14-2z" fill="#fff" stroke="#eda383" />
        <path d="M7 8l14 1-1 9-14-1z" fill="#d5441c" />
        <path d="M9 10.500h3M9 13h3M9 15.500h3" stroke="#fff" />
        <circle cx="16.500" cy="13.500" r="2.500" fill="none" stroke="#fff" strokeWidth="1.500" />
      </svg>
    ),
  },
];

function Taskbar() {
  return (
    <div className="flex h-10 shrink-0 items-stretch bg-[#0b0909] text-white">
      <button aria-label="Пуск" className="flex w-12 items-center justify-center">
        <svg width="16" height="16" viewBox="0 0 16 16" fill="#fff"><path d="M0 2.300L6.500 1.400V7.500H0zM7.300 1.300L16 0v7.500H7.300zM0 8.300h6.500v6.200L0 13.600zM7.300 8.300H16V16l-8.700-1.300z" /></svg>
      </button>
      <button aria-label="Поиск" className="flex w-12 items-center justify-center">
        <svg width="16" height="16" viewBox="0 0 16 16" fill="none" stroke="#fff" strokeWidth="1.200"><circle cx="10" cy="6" r="5.300" /><path d="M6 10l-6 6" /></svg>
      </button>
      <button aria-label="Представление задач" className="mr-[3px] flex w-12 items-center justify-center">
        <svg width="20" height="16" viewBox="0 0 20 16" fill="none" stroke="#fff"><path d="M4.500 1.500h11v13h-11zM2.500 3.500h-2v9h2M17.500 3.500h2v9h-2" /></svg>
      </button>
      <div className="flex gap-px">
        {APPS.map((app) => (
          <button
            key={app.name}
            aria-label={app.name}
            className={clsx("flex w-12 flex-col items-center justify-between pt-2", app.active && "bg-[#3a3838]", app.hot && "bg-[#222120]")}
          >
            {app.icon}
            <span className={clsx("h-0.5", app.active ? "w-full bg-[#76b9ed]" : "w-10", app.open && "bg-[#76b9ed]")} />
          </button>
        ))}
      </div>
      <div className="ml-auto flex items-center pr-1">
        <button aria-label="Скрытые значки" className="flex w-6 justify-center">
          <svg width="12" height="7" viewBox="0 0 12 7" fill="none" stroke="#fff" strokeWidth="1.300"><path d="M.5 6.500L6 1l5.500 5.500" /></svg>
        </button>
        <button aria-label="Питание" className="flex w-6 justify-center">
          <svg width="16" height="14" viewBox="0 0 16 14" fill="none" stroke="#fff"><path d="M5.500 4.500h9v7h-9zM15.500 6.500v3M1.500 0v3M4.500 0v3M.5 3.500h5v2l-2 1.500h-1l-2-1.500zM3 7v4.500h2" /><path d="M8 6h5v4H8z" fill="#fff" stroke="none" /></svg>
        </button>
        <button aria-label="Сеть Wi-Fi" className="flex w-6 justify-center">
          <svg width="13" height="13" viewBox="0 0 13 13" fill="none" stroke="#ddd"><path d="M.5 12C1 5 5 1 12 .5M3.500 12C4 7 7 4 12 3.500M6.500 12C7 9 9 7 12 6.500" /><circle cx="10.500" cy="10.500" r="1.500" fill="#fff" /></svg>
        </button>
        <button aria-label="Громкость" className="flex w-6 justify-center">
          <svg width="17" height="14" viewBox="0 0 17 14" fill="none" stroke="#fff"><path d="M.5 4.500h3l4-3.500v12l-4-3.500h-3zM9.500 5c1 1 1 3 0 4M11.500 3c2 2 2 6 0 8" /><path d="M13.500 1c3 3 3 9 0 12" stroke="#777" /></svg>
        </button>
        <button className="w-[38px] text-center text-[12px]">РУС</button>
        <time dateTime="2021-11-07T16:41" className="w-16 text-center text-[11px] leading-[18px]">16:41<br />07.11.2021</time>
        <button aria-label="Центр уведомлений" className="flex w-11 justify-center">
          <svg width="16" height="16" viewBox="0 0 16 16" fill="none" stroke="#fff"><path d="M.5.5h15v12H10L8 15l-2-2.500H.5z" /></svg>
        </button>
        <span className="ml-[5px] h-10 w-px bg-[#4a4848]" />
      </div>
    </div>
  );
}

export default function App() {
  return (
    <div className="relative flex min-h-screen flex-col bg-[#bfdbff] font-['Noto_Sans','Open_Sans',sans-serif]">
      <TitleBar />
      <TabBar />
      <button aria-label="Кнопка Office" className="absolute top-0.5 left-0.5"><OfficeLogo /></button>
      <Ribbon />
      <div className="h-0.5 shrink-0 bg-[#98b4d8]" />
      <div className="flex flex-1">
        <SlidePanel />
        <div className="w-[5px] border-l border-[#e1eeff] bg-[#b0d0fb]" />
        <Workspace />
      </div>
      <StatusBar />
      <Taskbar />
    </div>
  );
}
